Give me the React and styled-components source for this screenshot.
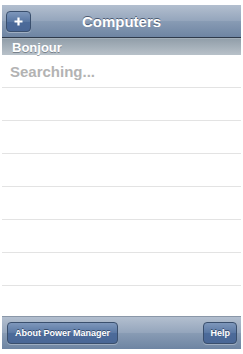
import React from 'react';
import styled, { createGlobalStyle } from 'styled-components';

const Global = createGlobalStyle`
  html, body { margin: 0; padding: 0; background: #fff; }
  body { font-family: "Liberation Sans", Arial, sans-serif; }
`;

const Screen = styled.div`
  width: 239px;
  height: 344px;
  margin: 5px 2px;
  display: flex;
  flex-direction: column;
  overflow: hidden;
`;

const NavBar = styled.div`
  height: 32px;
  flex-shrink: 0;
  display: flex;
  align-items: center;
  position: relative;
  padding: 0 4px;
  background: linear-gradient(#b3bfcf 0%, #94a5bc 50%, #889bb4 51%, #6e85a3 100%);
  border-bottom: 1px solid #2e3a4b;
`;

const Title = styled.div`
  position: absolute;
  left: 0;
  right: 0;
  text-align: center;
  color: #fff;
  font-size: 15px;
  font-weight: 700;
  text-shadow: 0 -1px 0 rgba(40, 55, 80, 0.7);
  pointer-events: none;
`;

const BarButton = styled.div`
  height: ${({ $square }) => ($square ? '19px' : '20px')};
  padding: 0 ${({ $wide }) => ($wide ? '7px' : '6px')};
  min-width: ${({ $square }) => ($square ? '11px' : 'auto')};
  display: flex;
  align-items: center;
  justify-content: center;
  border: 1px solid #3a4f6d;
  border-radius: 4px;
  background: linear-gradient(#7e97bb 0%, #5a78a4 50%, #4c6b9a 51%, #4a6796 100%);
  color: #fff;
  font-size: 9px;
  font-weight: 700;
  text-shadow: 0 -1px 0 rgba(20, 35, 60, 0.6);
  box-shadow: 0 1px 0 rgba(255, 255, 255, 0.3);
`;

const SectionHeader = styled.div`
  height: 16px;
  flex-shrink: 0;
  display: flex;
  align-items: center;
  padding-left: 10px;
  background: linear-gradient(#929faa, #b8c1c9);
  border-top: 1px solid #a2aeb8;
  color: #fff;
  font-size: 13px;
  font-weight: 700;
  text-shadow: 0 1px 0 rgba(80, 90, 100, 0.6);
`;

const List = styled.div`
  flex: 1;
  overflow: hidden;
`;

const Row = styled.div`
  height: 32px;
  border-bottom: 1px solid #e3e3e3;
  display: flex;
  align-items: center;
  padding-left: 8px;
  color: #b3b3b3;
  font-size: 15px;
  font-weight: 700;
`;

const Toolbar = styled.div`
  height: 33px;
  flex-shrink: 0;
  display: flex;
  align-items: center;
  justify-content: space-between;
  padding: 0 4px 0 5px;
  box-sizing: border-box;
  background: linear-gradient(#b3bfcf 0%, #94a5bc 50%, #889bb4 51%, #6e85a3 100%);
  border-top: 1px solid #8a97a8;
`;

export default function App() {
  const rows = ['Searching...', '', '', '', '', '', '', ''];
  return (
    <>
      <Global />
      <Screen>
        <NavBar>
          <BarButton $square>
            <svg width="11" height="11" viewBox="0 0 11 11">
              <path d="M5.5 1.5v8M1.5 5.5h8" stroke="#fff" strokeWidth="2.2" />
            </svg>
          </BarButton>
          <Title>Computers</Title>
        </NavBar>
        <SectionHeader>Bonjour</SectionHeader>
        <List>
          {rows.map((r, i) => (
            <Row key={i}>{r}</Row>
          ))}
        </List>
        <Toolbar>
          <BarButton $wide>About Power Manager</BarButton>
          <BarButton>Help</BarButton>
        </Toolbar>
      </Screen>
    </>
  );
}
